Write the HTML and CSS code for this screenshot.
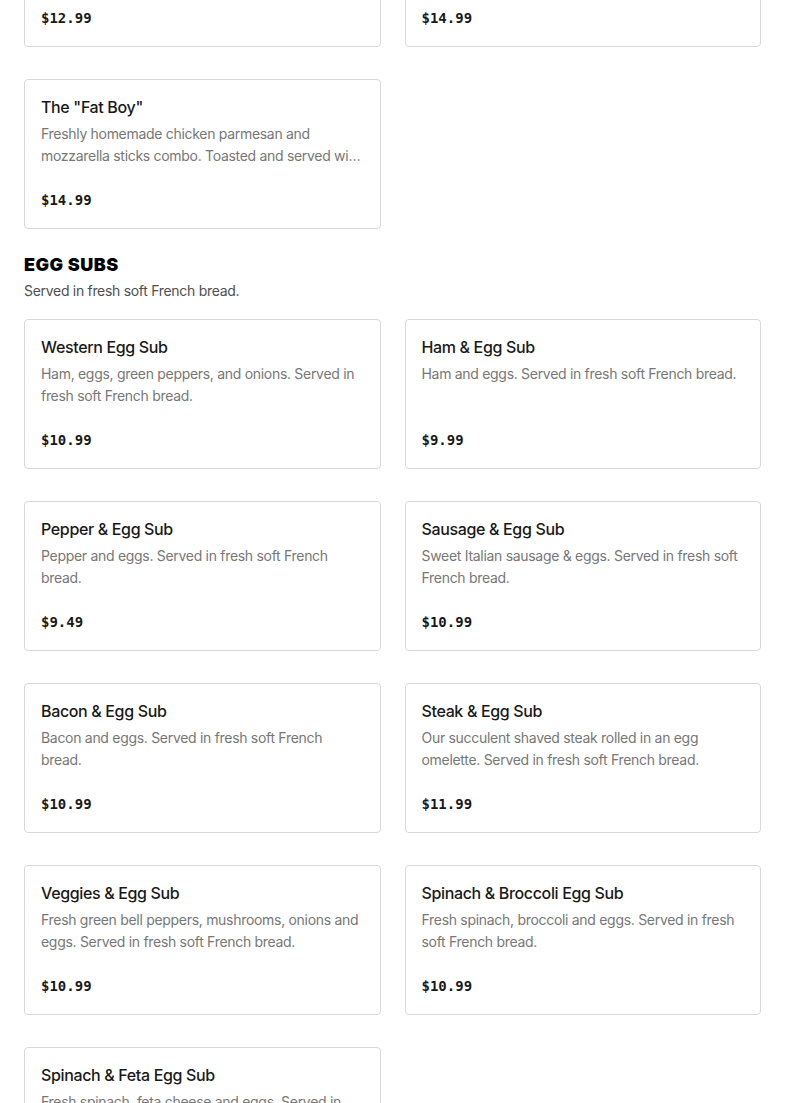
FILE: index.html
```html
<!DOCTYPE html>
<html lang="en">
<head>
<meta charset="utf-8">
<title>Menu</title>
<link rel="stylesheet" href="styles.css">
</head>
<body>
<main class="menu">
  <section class="section">
    <div class="grid">
      <article class="card">
        <h3 class="card-title">Chicken Parmesan Sub</h3>
        <p class="card-desc">Freshly homemade chicken parmesan with marinara sauce and melted mozzarella cheese.</p>
        <p class="card-price">$12.99</p>
      </article>
      <article class="card">
        <h3 class="card-title">The "Big Boy"</h3>
        <p class="card-desc">Freshly homemade chicken cutlet with bacon, lettuce, tomato and mayo.</p>
        <p class="card-price">$14.99</p>
      </article>
      <article class="card">
        <h3 class="card-title">The "Fat Boy"</h3>
        <p class="card-desc">Freshly homemade chicken parmesan and mozzarella sticks combo. Toasted and served with marinara sauce.</p>
        <p class="card-price">$14.99</p>
      </article>
    </div>
  </section>

  <section class="section">
    <h2 class="section-title">EGG SUBS</h2>
    <p class="section-sub">Served in fresh soft French bread.</p>
    <div class="grid">
      <article class="card">
        <h3 class="card-title">Western Egg Sub</h3>
        <p class="card-desc">Ham, eggs, green peppers, and onions. Served in fresh soft French bread.</p>
        <p class="card-price">$10.99</p>
      </article>
      <article class="card">
        <h3 class="card-title">Ham &amp; Egg Sub</h3>
        <p class="card-desc">Ham and eggs. Served in fresh soft French bread.</p>
        <p class="card-price">$9.99</p>
      </article>
      <article class="card">
        <h3 class="card-title">Pepper &amp; Egg Sub</h3>
        <p class="card-desc">Pepper and eggs. Served in fresh soft French bread.</p>
        <p class="card-price">$9.49</p>
      </article>
      <article class="card">
        <h3 class="card-title">Sausage &amp; Egg Sub</h3>
        <p class="card-desc">Sweet Italian sausage &amp; eggs. Served in fresh soft French bread.</p>
        <p class="card-price">$10.99</p>
      </article>
      <article class="card">
        <h3 class="card-title">Bacon &amp; Egg Sub</h3>
        <p class="card-desc">Bacon and eggs. Served in fresh soft French bread.</p>
        <p class="card-price">$10.99</p>
      </article>
      <article class="card">
        <h3 class="card-title">Steak &amp; Egg Sub</h3>
        <p class="card-desc">Our succulent shaved steak rolled in an egg omelette. Served in fresh soft French bread.</p>
        <p class="card-price">$11.99</p>
      </article>
      <article class="card">
        <h3 class="card-title">Veggies &amp; Egg Sub</h3>
        <p class="card-desc">Fresh green bell peppers, mushrooms, onions and eggs. Served in fresh soft French bread.</p>
        <p class="card-price">$10.99</p>
      </article>
      <article class="card">
        <h3 class="card-title">Spinach &amp; Broccoli Egg Sub</h3>
        <p class="card-desc">Fresh spinach, broccoli and eggs. Served in fresh soft French bread.</p>
        <p class="card-price">$10.99</p>
      </article>
      <article class="card">
        <h3 class="card-title">Spinach &amp; Feta Egg Sub</h3>
        <p class="card-desc">Fresh spinach, feta cheese and eggs. Served in fresh soft French bread.</p>
        <p class="card-price">$10.99</p>
      </article>
    </div>
  </section>
</main>
</body>
</html>
```

FILE: styles.css
```css
* {
  box-sizing: border-box;
}

html, body {
  margin: 0;
  padding: 0;
  background: #ffffff;
}

body {
  font-family: Inter, "Liberation Sans", Arial, sans-serif;
  color: #191919;
  overflow: hidden;
}

.menu {
  margin-top: -103px;
  padding: 0 24px;
}

.section + .section {
  margin-top: 24px;
}

.section-title {
  margin: 0;
  font-size: 18px;
  line-height: 22px;
  font-weight: 900;
  letter-spacing: 0.5px;
  color: #000000;
  position: relative;
  top: 1px;
}

.section-sub {
  margin: 6px 0 18px;
  font-size: 14px;
  line-height: 20px;
  letter-spacing: -0.3px;
  color: #4f4f4f;
}

.grid {
  display: grid;
  grid-template-columns: 1fr 1fr;
  column-gap: 24px;
  row-gap: 32px;
}

.card {
  border: 1px solid #d8d8d8;
  border-radius: 4px;
  padding: 16px;
  background: #ffffff;
  min-width: 0;
}

.card-title {
  margin: 0;
  font-size: 16px;
  line-height: 23px;
  font-weight: 500;
  letter-spacing: -0.35px;
  color: #191919;
}

.card-desc {
  margin: 4px 0 0;
  font-size: 14px;
  line-height: 22px;
  height: 44px;
  letter-spacing: -0.3px;
  color: #777777;
  display: -webkit-box;
  -webkit-line-clamp: 2;
  -webkit-box-orient: vertical;
  overflow: hidden;
}

.card-price {
  margin: 21px 0 0;
  font-family: "DejaVu Sans Mono", "Liberation Mono", monospace;
  font-weight: 700;
  font-size: 14px;
  line-height: 24px;
  color: #191919;
}
```
